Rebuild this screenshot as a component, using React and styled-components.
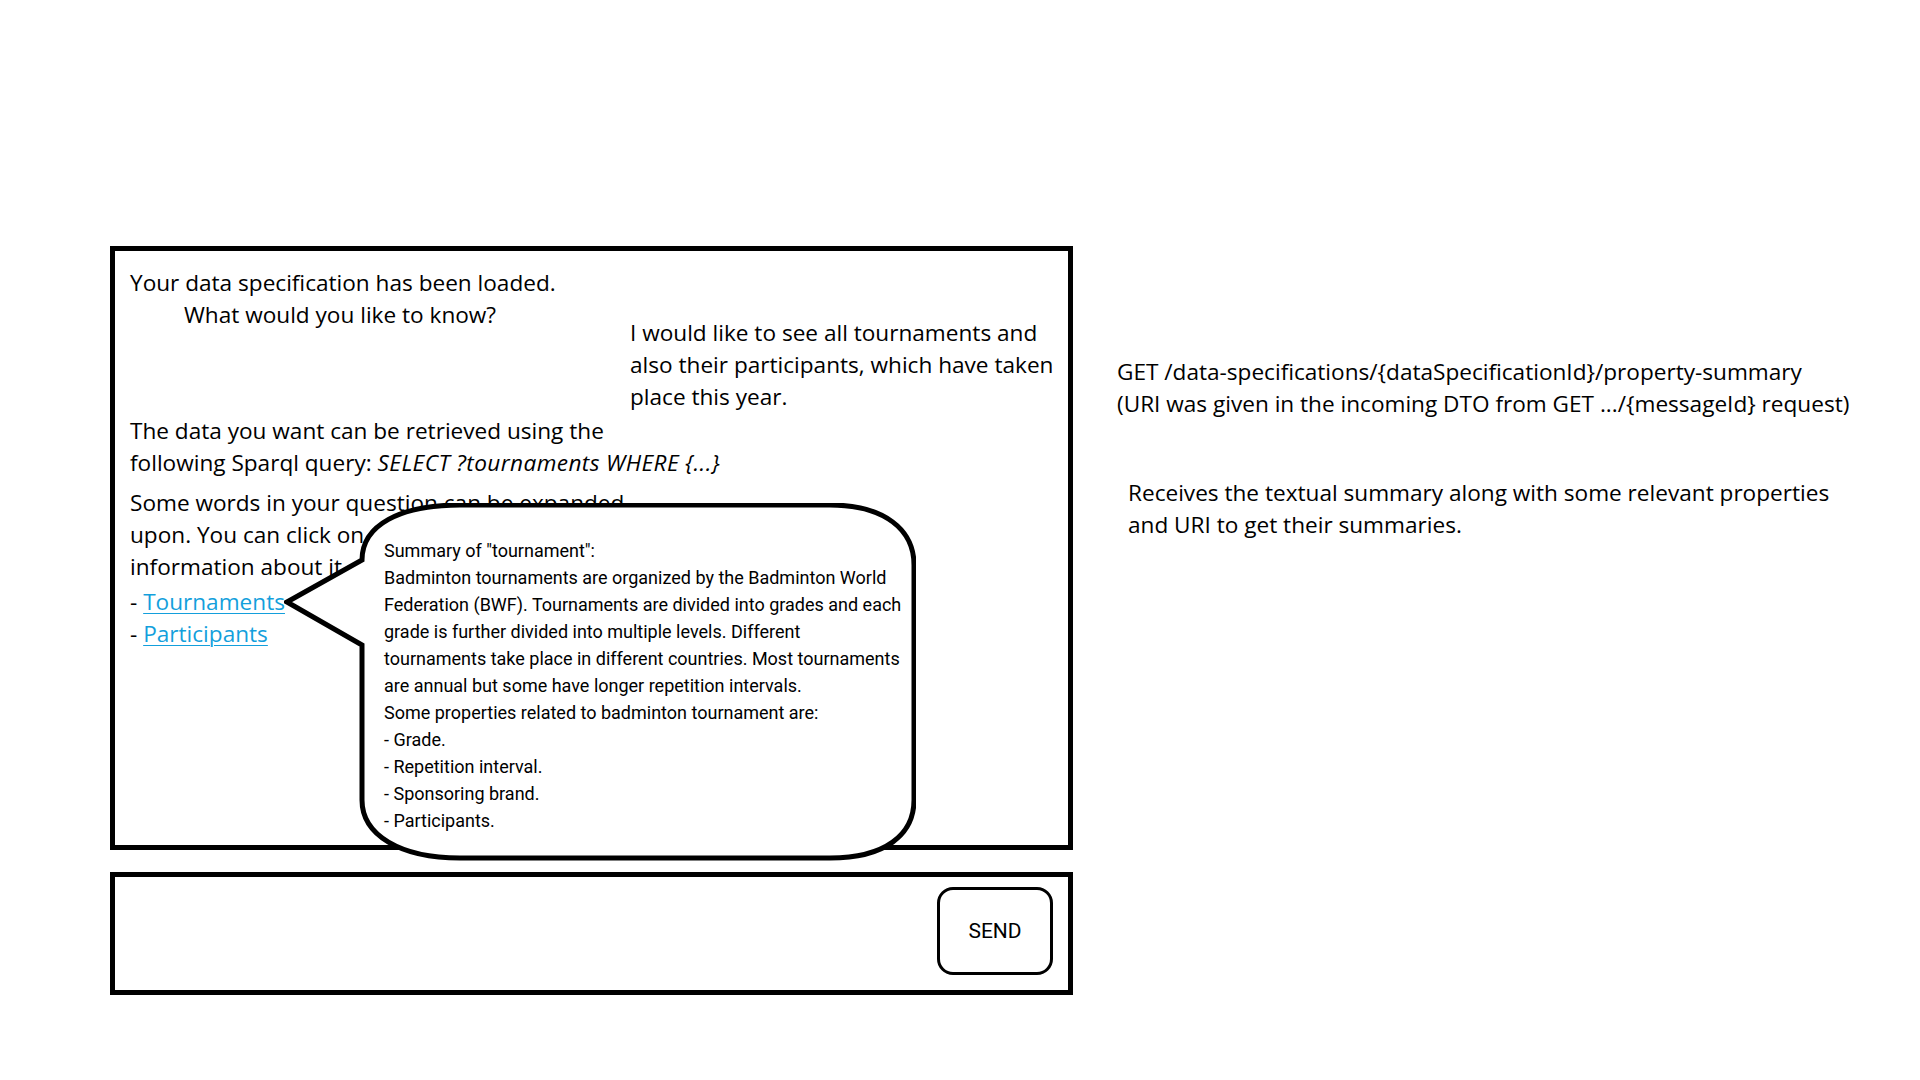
import React from 'react'
import styled, { createGlobalStyle } from 'styled-components'

const GlobalStyle = createGlobalStyle`
  html, body {
    margin: 0;
    padding: 0;
    background: #fff;
  }
  body {
    font-family: "Open Sans", "Noto Sans", sans-serif;
    color: #000;
  }
`

const Page = styled.div`
  display: flex;
  align-items: flex-start;
  padding: 246px 0 0 110px;
  width: 1920px;
  height: 1080px;
  box-sizing: border-box;
`

const ChatColumn = styled.div`
  display: flex;
  flex-direction: column;
  gap: 22px;
  width: 963px;
`

const ChatBox = styled.div`
  position: relative;
  box-sizing: border-box;
  height: 604px;
  border: 5px solid #000;
  padding: 16px 5px 0 15px;
  font-size: 22.6px;
  line-height: 32px;
`

const TopRow = styled.div`
  display: flex;
  align-items: flex-start;
`

const Message = styled.div`
  margin-top: ${(p) => p.$top || 0}px;
`

const UserMessage = styled.div`
  margin-left: auto;
  width: 433px;
  padding-top: 50px;
`

const Line = styled.div`
  white-space: nowrap;
  padding-left: ${(p) => p.$indent || 0}px;
`

const Query = styled.em`
  font-style: italic;
  letter-spacing: 0.4px;
`

const Link = styled.a`
  color: #139fdc;
  text-decoration: underline;
  text-underline-offset: 3px;
  text-decoration-thickness: 1px;
`

const Bubble = styled.div`
  position: absolute;
  left: 169px;
  top: 252px;
  width: 632px;
  height: 359px;
  box-sizing: border-box;
  padding: 34px 0 0 100px;
  font-family: Roboto, "Liberation Sans", sans-serif;
  font-size: 18px;
  line-height: 27px;
  z-index: 2;

  svg {
    position: absolute;
    inset: 0;
    z-index: -1;
  }
`

const BubbleText = styled.div`
  position: relative;
`

const InputBox = styled.div`
  box-sizing: border-box;
  height: 123px;
  border: 5px solid #000;
  display: flex;
  align-items: center;
  justify-content: flex-end;
  padding: 0 15px 5px 0;
`

const SendButton = styled.button`
  width: 116px;
  height: 88px;
  box-sizing: border-box;
  border: 3px solid #000;
  border-radius: 16px;
  background: #fff;
  font-family: Roboto, "Liberation Sans", sans-serif;
  font-size: 21px;
  color: #000;
  padding: 0;
  cursor: pointer;
`

const Notes = styled.div`
  display: flex;
  flex-direction: column;
  gap: 57px;
  margin-left: 44px;
  padding-top: 110px;
  font-size: 22.6px;
  line-height: 32px;
  white-space: nowrap;
`

const Note = styled.div`
  padding-left: ${(p) => p.$indent || 0}px;
`

const summaryLines = [
  'Summary of "tournament":',
  'Badminton tournaments are organized by the Badminton World',
  'Federation (BWF). Tournaments are divided into grades and each',
  'grade is further divided into multiple levels. Different',
  'tournaments take place in different countries. Most tournaments',
  'are annual but some have longer repetition intervals.',
  'Some properties related to badminton tournament are:',
  '- Grade.',
  '- Repetition interval.',
  '- Sponsoring brand.',
  '- Participants.',
]

const SummaryBubble = () => (
  <Bubble>
    <svg width="632" height="359" viewBox="0 0 632 359">
      <path
        d="M 78 57 C 78 22, 116 2, 176 2 L 546 2 C 601 2, 630 27, 630 62 L 630 297 C 630 332, 601 355, 546 355 L 176 355 C 116 355, 78 332, 78 297 L 78 142 L 3 99 Z"
        fill="#fff"
        stroke="#000"
        strokeWidth="5"
        strokeLinejoin="miter"
      />
    </svg>
    <BubbleText>
      {summaryLines.map((l, i) => (
        <Line key={i}>{l}</Line>
      ))}
    </BubbleText>
  </Bubble>
)

const App = () => {
  return (
    <>
      <GlobalStyle />
      <Page>
        <ChatColumn>
          <ChatBox>
            <TopRow>
              <Message>
                <Line>Your data specification has been loaded.</Line>
                <Line $indent={54}>What would you like to know?</Line>
              </Message>
              <UserMessage>
                <Line>I would like to see all tournaments and</Line>
                <Line>also their participants, which have taken</Line>
                <Line>place this year.</Line>
              </UserMessage>
            </TopRow>
            <Message $top={2}>
              <Line>The data you want can be retrieved using the</Line>
              <Line>
                following Sparql query: <Query>SELECT ?tournaments WHERE {'{...}'}</Query>
              </Line>
            </Message>
            <Message $top={8}>
              <Line>Some words in your question can be expanded</Line>
              <Line>upon. You can click on them to get more</Line>
              <Line>information about it.</Line>
            </Message>
            <Message $top={3}>
              <Line>
                - <Link href="#">Tournaments</Link>
              </Line>
              <Line>
                - <Link href="#">Participants</Link>
              </Line>
            </Message>
            <SummaryBubble />
          </ChatBox>
          <InputBox>
            <SendButton>SEND</SendButton>
          </InputBox>
        </ChatColumn>
        <Notes>
          <Note>
            GET /data-specifications/{'{dataSpecificationId}'}/property-summary
            <br />
            (URI was given in the incoming DTO from GET .../{'{messageId}'} request)
          </Note>
          <Note $indent={11}>
            Receives the textual summary along with some relevant properties
            <br />
            and URI to get their summaries.
          </Note>
        </Notes>
      </Page>
    </>
  )
}

export default App
